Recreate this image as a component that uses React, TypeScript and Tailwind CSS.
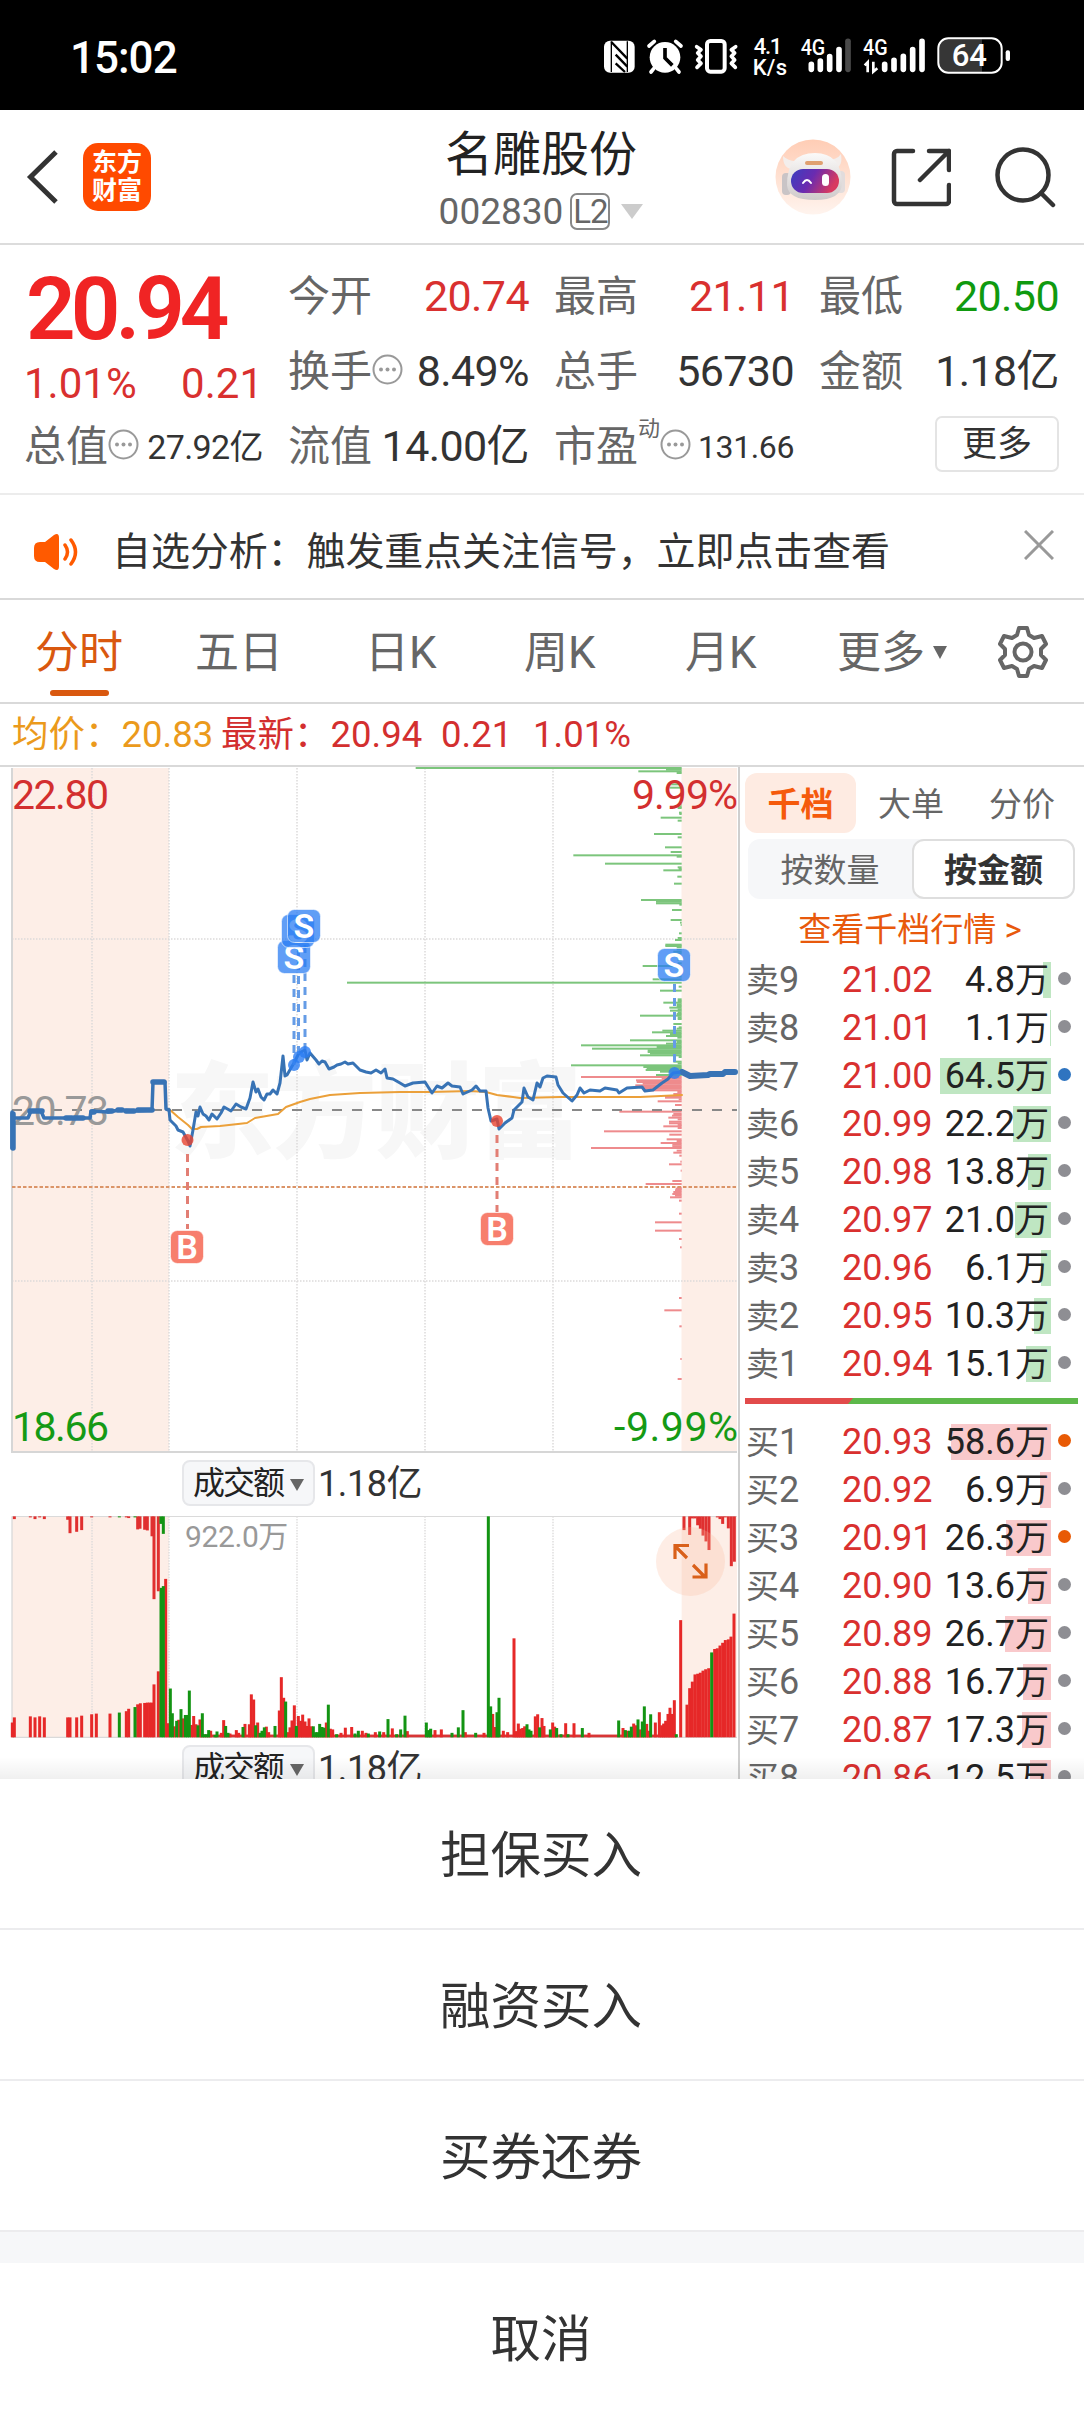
import type { ReactNode } from "react";
import clsx from "clsx";

type Bar = [number, number];

const TABS = [
  { label: "五日", width: "w-[170px]" },
  { label: "日K", width: "w-[159px]" },
  { label: "周K", width: "w-[161px]" },
  { label: "月K", width: "w-[152px]" },
];

const SELL = [
  { name: "卖9", price: "21.02", amount: "4.8万", bar: 8, dot: "gray" },
  { name: "卖8", price: "21.01", amount: "1.1万", bar: 1, dot: "gray" },
  { name: "卖7", price: "21.00", amount: "64.5万", bar: 111, dot: "blue" },
  { name: "卖6", price: "20.99", amount: "22.2万", bar: 38, dot: "gray" },
  { name: "卖5", price: "20.98", amount: "13.8万", bar: 23, dot: "gray" },
  { name: "卖4", price: "20.97", amount: "21.0万", bar: 36, dot: "gray" },
  { name: "卖3", price: "20.96", amount: "6.1万", bar: 10, dot: "gray" },
  { name: "卖2", price: "20.95", amount: "10.3万", bar: 17, dot: "gray" },
  { name: "卖1", price: "20.94", amount: "15.1万", bar: 25, dot: "gray" },
];

const BUY = [
  { name: "买1", price: "20.93", amount: "58.6万", bar: 100, dot: "orange" },
  { name: "买2", price: "20.92", amount: "6.9万", bar: 11, dot: "gray" },
  { name: "买3", price: "20.91", amount: "26.3万", bar: 45, dot: "orange" },
  { name: "买4", price: "20.90", amount: "13.6万", bar: 23, dot: "gray" },
  { name: "买5", price: "20.89", amount: "26.7万", bar: 46, dot: "gray" },
  { name: "买6", price: "20.88", amount: "16.7万", bar: 28, dot: "gray" },
  { name: "买7", price: "20.87", amount: "17.3万", bar: 29, dot: "gray" },
  { name: "买8", price: "20.86", amount: "12.5万", bar: 21, dot: "gray" },
];

// price line before the open, during the session, and after the close
const PRE_LINE =
  "12,1148 12,1112 14,1118 28,1118 31,1111 41,1111 44,1118 90,1118 91,1111 108,1112 120,1110 134,1111 152,1110 153,1082 165,1082 166,1109 169,1110";
const DAY_LINE =
  "169,1110 170,1120 176,1126 178,1130 183,1132 188,1141 190,1146 193,1130 196,1112 198,1116 200,1107 203,1114 206,1116 209,1120 212,1114 217,1119 221,1113 224,1107 231,1111 236,1104 241,1107 246,1109 250,1098 253,1082 256,1092 258,1089 261,1097 264,1100 267,1094 270,1094 273,1090 277,1094 280,1083 283,1056 285,1076 287,1075 291,1068 294,1063 299,1053 305,1050 307,1060 310,1053 316,1060 319,1064 322,1061 325,1062 329,1069 334,1067 337,1065 341,1064 345,1062 348,1064 353,1063 360,1070 366,1072 371,1073 376,1070 381,1073 385,1069 387,1078 393,1079 400,1083 405,1086 413,1083 425,1082 432,1093 437,1086 442,1088 448,1083 452,1086 460,1087 463,1094 472,1090 476,1086 480,1091 486,1091 488,1108 491,1121 497,1119 499,1129 505,1123 512,1118 514,1110 522,1102 524,1088 528,1097 533,1100 537,1083 540,1087 543,1078 547,1076 556,1077 558,1085 563,1093 572,1101 577,1095 580,1088 584,1093 590,1090 600,1091 605,1088 617,1090 619,1093 627,1088 642,1087 645,1091 653,1090 662,1083 668,1079 673,1073 682,1072";
const POST_LINE = "682,1072 690,1076 708,1075 710,1074 723,1074 725,1072 735,1072";
const AVG_LINE =
  "169,1109 178,1117 188,1125 192,1129 197,1129 201,1127 220,1126 247,1123 255,1118 278,1114 286,1107 300,1102 310,1099 330,1095 360,1093 400,1092 430,1092 470,1091 486,1092 497,1095 513,1097 520,1098 560,1097 600,1097 640,1097 682,1095";

// order depth, [y, left edge] in thirds of a pixel, all end at x = 905
const ASK_DEPTH: Bar[] = [
  [24, 107], [29, 858], [34, 775], [39, 890], [73, 868], [83, 868], [134, 897], [140, 893], [144, 893], [158, 897], [162, 898],
  [173, 842], [182, 893], [222, 822], [232, 893], [262, 855], [276, 872], [286, 580], [290, 890], [311, 675],
  [322, 893], [327, 896], [331, 850], [350, 892], [371, 882], [420, 783], [425, 828], [430, 828], [434, 898], [450, 876],
  [480, 872], [488, 900], [495, 902], [520, 897], [534, 893], [540, 885], [554, 856], [558, 856], [563, 890], [568, 890], [575, 880],
  [580, 890], [590, 893], [600, 893], [610, 893], [618, 788], [628, 893], [640, 893], [650, 890], [658, 818], [668, -99],
  [680, 896], [692, 840], [718, 893], [723, 893], [728, 850], [733, 890], [738, 890], [743, 868], [748, 893], [752, 870],
  [757, 893], [762, 890], [767, 780], [772, 893], [777, 893], [792, 880], [802, 896], [806, 890], [812, 847], [817, 816],
  [822, 870], [828, 858], [833, 892], [841, 750], [846, 890], [851, 858], [856, 603], [861, 830], [866, 636], [871, 803],
  [876, 803], [881, 810], [886, 780], [891, 896], [905, 880], [910, 893], [916, 573], [921, 790], [926, 800], [930, 797],
  [935, 840], [940, 870], [945, 828],
];
const BID_DEPTH: Bar[] = [
  [951, 603], [956, 845], [961, 768], [966, 770], [971, 788], [976, 766], [981, 780], [986, 790], [991, 790], [996, 892],
  [1002, 880], [1008, 855], [1013, 855], [1018, 896], [1024, 833], [1035, 885], [1055, 718], [1062, 880], [1067, 876],
  [1073, 865], [1078, 893], [1085, 867], [1090, 867], [1095, 893], [1099, 850], [1104, 893], [1114, 672], [1124, 868],
  [1138, 860], [1143, 890], [1149, 842], [1154, 877], [1159, 877], [1164, 633], [1172, 890], [1178, 880], [1187, 898],
  [1205, 901], [1213, 867], [1232, 902], [1263, 877], [1272, 797], [1283, 890], [1287, 887], [1291, 885], [1296, 880], [1302, 877],
  [1307, 885], [1312, 870], [1322, 897], [1361, 897], [1387, 825], [1412, 825], [1437, 897], [1462, 900], [1614, 897],
  [1651, 853], [1699, 898], [1797, 901], [1857, 893],
];

// turnover bars, [x centre, top]; the base line is at 1443
const UP_VOLUME: Bar[] = [
  [37, 1400], [43, 1385], [91, 1382], [105, 1385], [119, 1382], [133, 1385], [203, 1385], [210, 1385], [230, 1385],
  [245, 1380], [275, 1376], [289, 1374], [330, 1374], [379, 1367], [386, 1360], [413, 1347], [421, 1344], [434, 1343],
  [442, 1342], [449, 1342], [456, 1342], [462, 1289], [475, 1251], [497, 982], [504, 1402], [523, 1411], [536, 1392],
  [549, 1388], [575, 1407], [581, 1381], [588, 1405], [600, 1391], [632, 1424], [664, 1430], [671, 1393], [690, 1432],
  [709, 1422], [716, 1430], [735, 1404], [748, 1405], [754, 1318], [761, 1333], [773, 1400], [799, 1412], [806, 1428],
  [838, 1365], [844, 1268], [851, 1328], [863, 1428], [870, 1414], [876, 1394], [883, 1350], [895, 1381], [902, 1395],
  [908, 1377], [915, 1397], [921, 1410], [927, 1388], [934, 1411], [979, 1400], [991, 1418], [998, 1420], [1023, 1430],
  [1036, 1415], [1055, 1413], [1087, 1424], [1098, 1430], [1126, 1428], [1151, 1428], [1177, 1417], [1222, 1425],
  [1305, 1422], [1324, 1420], [1396, 1428], [1452, 1430], [1478, 1375], [1485, 1413], [1510, 1424], [1523, 1428],
  [1542, 1155], [1549, 1425], [1555, 1403], [1561, 1418], [1568, 1416], [1574, 1411], [1606, 1382], [1613, 1376],
  [1626, 1387], [1632, 1410], [1658, 1400], [1664, 1412], [1697, 1402], [1722, 1402], [1767, 1430], [1869, 1416],
  [1882, 1424], [1901, 1403], [1908, 1408], [1920, 1420], [1940, 1404], [1946, 1424], [1966, 1400], [1978, 1370],
  [1985, 1408], [1991, 1403], [1997, 1395], [2004, 1375], [2010, 1357], [2017, 1375], [2023, 1335], [2042, 1102],
  [2061, 1348], [2069, 1300], [2077, 1281], [2085, 1260], [2093, 1258], [2101, 1255], [2109, 1249], [2117, 1245],
  [2126, 1242], [2144, 1186], [2152, 1184], [2160, 1176], [2168, 1168], [2176, 1160], [2185, 1158], [2193, 1150],
  [2202, 1083],
];
const DOWN_VOLUME: Bar[] = [
  [358, 1371], [405, 1355], [483, 1008], [490, 1003], [511, 1301], [517, 1373], [530, 1395], [543, 1361], [556, 1378],
  [562, 1378], [568, 1307], [594, 1408], [607, 1373], [613, 1434], [620, 1434], [626, 1422], [645, 1436], [651, 1426],
  [677, 1410], [684, 1430], [729, 1413], [767, 1408], [780, 1430], [786, 1424], [793, 1414], [825, 1410], [857, 1339],
  [889, 1410], [940, 1411], [947, 1428], [953, 1428], [959, 1404], [966, 1413], [972, 1415], [985, 1348], [1010, 1434],
  [1065, 1432], [1075, 1424], [1105, 1432], [1139, 1426], [1164, 1390], [1190, 1434], [1202, 1420], [1215, 1380],
  [1279, 1400], [1286, 1422], [1292, 1418], [1356, 1430], [1375, 1414], [1389, 1364], [1427, 1430], [1465, 800],
  [1472, 1353], [1491, 1370], [1497, 1328], [1581, 1405], [1587, 1420], [1593, 1424], [1619, 1414], [1651, 1420],
  [1670, 1416], [1683, 1434], [1704, 1434], [1747, 1416], [1856, 1394], [1876, 1422], [1888, 1424], [1894, 1412],
  [1914, 1391], [1927, 1397], [1933, 1353], [1952, 1376], [2029, 1434], [2135, 1196],
];

// unmatched auction volume hangs down from the top edge at 800
const HANG_UP: Bar[] = [
  [43, 808], [91, 803], [105, 808], [119, 803], [133, 808], [203, 810], [210, 849], [230, 845], [245, 840], [275, 803],
  [330, 803], [379, 803], [386, 805], [413, 838], [420, 836], [434, 839], [442, 841], [456, 858], [462, 1041], [475, 1018],
  [2052, 840], [2069, 854], [2077, 806], [2085, 806], [2093, 826], [2101, 836], [2109, 856], [2118, 873], [2127, 898],
  [2152, 803], [2160, 808], [2168, 822], [2176, 803], [2185, 835], [2194, 945], [2203, 932],
];
const HANG_DOWN: Bar[] = [[358, 803], [405, 803], [483, 822], [490, 851]];

const SHEET = ["担保买入", "融资买入", "买券还券"];

function StatusBar() {
  return (
    <div className="flex h-[110px] shrink-0 items-center justify-between bg-black pl-[70px] pr-[59px] text-white">
      <span className="mt-1.5 text-[44px] font-medium leading-none tracking-[-1px]">15:02</span>
      <svg className="h-[70px] w-[430px]" viewBox="0 0 1290 210" fill="none">
        {/* NFC */}
        <rect x="27" y="62" width="92" height="96" rx="18" fill="#fff" />
        <path d="M49 64v92M97 64v92" stroke="#000" strokeWidth="4" />
        <path d="M49 66 97 116M62 104 97 140M62 130l28 26" stroke="#000" strokeWidth="7" />
        {/* alarm */}
        <circle cx="210" cy="112" r="46" fill="#fff" />
        <path d="m162 78 16-14M258 78l-16-14M176 146l-8 10M244 146l8 10" stroke="#fff" strokeWidth="11" strokeLinecap="round" />
        <path d="M210 84v30l22 22" stroke="#000" strokeWidth="11" />
        {/* vibrate */}
        <rect x="336" y="63" width="53" height="92" rx="10" stroke="#fff" strokeWidth="12" />
        <path d="m305 80 13 9-10 10 10 10-10 11 10 10-12 12M422 80l-13 9 10 10-10 10 10 11-10 10 12 12" stroke="#fff" strokeWidth="11" strokeLinejoin="round" strokeLinecap="round" />
        <g fill="#fff" fontFamily="Roboto, sans-serif" fontWeight="500">
          <text x="476" y="101" fontSize="66" textLength="86">4.1</text>
          <text x="473" y="164" fontSize="66" textLength="103">K/s</text>
          <text x="617" y="106" fontSize="66" textLength="74" lengthAdjust="spacingAndGlyphs">4G</text>
          <text x="804" y="106" fontSize="66" textLength="74" lengthAdjust="spacingAndGlyphs">4G</text>
        </g>
        <g stroke="#fff" strokeWidth="17" strokeLinecap="round">
          <path d="M649 133v15M676 123v25M704 110v38M732 89v59" />
          <path d="M759 64v84" stroke="#4a4a4a" />
          <path d="M869 133v15M897 121v27M925 109v39M953 89v59M981 64v84" />
        </g>
        <path d="M809 136l9-9v30M835 125v30l12-10" stroke="#fff" strokeWidth="8" />
        {/* battery */}
        <rect x="1030" y="55" width="190" height="103" rx="30" fill="#000" />
        <path d="M1060 58h101v98h-101a27 27 0 0 1-27-27V85a27 27 0 0 1 27-27Z" fill="#363636" />
        <rect x="1030" y="55" width="190" height="103" rx="30" stroke="#fff" strokeWidth="6" />
        <rect x="1232" y="91" width="13" height="32" rx="6" fill="#fff" />
        <text x="1070" y="139" fill="#fff" fontSize="92" fontFamily="Roboto, sans-serif" fontWeight="500" textLength="106" lengthAdjust="spacingAndGlyphs">64</text>
      </svg>
    </div>
  );
}

function Header() {
  return (
    <header className="grid h-[135px] shrink-0 grid-cols-[1fr_auto_1fr] items-center border-b-2 border-[#dcdcdc] pl-[26px] pr-[28px]">
      <div className="flex items-center gap-[23px]">
        <svg className="h-[56px] w-[34px]" viewBox="0 0 34 56" fill="none">
          <path d="M30 3 4.500 28 30 53" stroke="#333" strokeWidth="5" />
        </svg>
        <div className="flex size-[68px] flex-col items-center justify-center rounded-[15px] bg-[#ff4a00] text-[25px] font-bold leading-[28px] text-white">
          <span>东方</span>
          <span>财富</span>
        </div>
      </div>
      <div className="flex flex-col items-center pt-[4px]">
        <h1 className="text-[48px] leading-[62px] text-[#222]">名雕股份</h1>
        <div className="flex h-[48px] items-center pt-[3px] text-[#666]">
          <span className="text-[37px] leading-none">002830</span>
          <span className="ml-[7px] flex h-[37px] w-[40px] items-center justify-center rounded-[7px] border-2 border-[#888] text-[33px] leading-none tracking-[-1px]">L2</span>
          <svg className="ml-[11px] h-[15px] w-[22px]" viewBox="0 0 22 15">
            <path d="M0 0h22L11 15Z" fill="#ccc" />
          </svg>
        </div>
      </div>
      <div className="flex items-center justify-end">
        <svg className="size-[76px]" viewBox="0 0 76 76">
          <defs>
            <linearGradient id="halo" x1="0" y1="0" x2="0" y2="1">
              <stop offset="0" stopColor="#ffcdb5" />
              <stop offset="1" stopColor="#fff4ee" />
            </linearGradient>
            <linearGradient id="visor" x1="0" y1="0" x2="1" y2="0.3">
              <stop offset="0" stopColor="#3a3fc0" />
              <stop offset="0.5" stopColor="#6a2bb0" />
              <stop offset="1" stopColor="#d83a60" />
            </linearGradient>
            <linearGradient id="shell" x1="0" y1="0" x2="0" y2="1">
              <stop offset="0" stopColor="#fbfaf9" />
              <stop offset="1" stopColor="#cfcaca" />
            </linearGradient>
          </defs>
          <circle cx="38" cy="38" r="37.500" fill="url(#halo)" />
          <path d="M8 17q0 13 10 13l5-8q-9 1-15-5ZM66 15q2 13-6 14l-8-8q10 0 14-6Z" fill="#f3eeec" />
          <rect x="7" y="34" width="9" height="22" rx="4" fill="#c9c4c6" />
          <rect x="61" y="32" width="9" height="22" rx="4" fill="#e2dcdc" />
          <path d="M12 46q0-32 28-32 26 0 27 30 0 17-27 17T12 46Z" fill="url(#shell)" />
          <rect x="30" y="22" width="18" height="4" rx="2" fill="#e0a070" />
          <rect x="16" y="30" width="48" height="24" rx="12" fill="url(#visor)" />
          <path d="M28 44q4-6 8 0" stroke="#fff" strokeWidth="2" fill="none" strokeLinecap="round" />
          <rect x="47" y="35" width="7" height="12" rx="3.500" fill="#fff" />
        </svg>
        <svg className="ml-[40px] size-[60px]" viewBox="0 0 60 60" fill="none" stroke="#333" strokeWidth="4.500" strokeLinecap="round" strokeLinejoin="round">
          <path d="M22 4H6a3 3 0 0 0-3 3v47a3 3 0 0 0 3 3h49a3 3 0 0 0 3-3V38M38 4h20v19M58 4 29 33" />
        </svg>
        <svg className="ml-[43px] size-[62px]" viewBox="0 0 62 62" fill="none" stroke="#333" strokeWidth="4.500" strokeLinecap="round">
          <circle cx="29" cy="29" r="25.500" />
          <path d="m47 47 12 12" />
        </svg>
      </div>
    </header>
  );
}

function InfoDot() {
  return (
    <svg className="mb-[4px] size-[31px] shrink-0" viewBox="0 0 31 31">
      <circle cx="15.500" cy="15.500" r="14" fill="none" stroke="#999" strokeWidth="2" />
      <circle cx="9" cy="15.500" r="2" fill="#999" />
      <circle cx="15.500" cy="15.500" r="2" fill="#999" />
      <circle cx="22" cy="15.500" r="2" fill="#999" />
    </svg>
  );
}

function Stat({ label, value, info, tone = "text-[#333]", size = "text-[43px]" }: {
  label: string;
  value: string;
  info?: boolean;
  tone?: string;
  size?: string;
}) {
  return (
    <div className="flex h-[75px] items-center justify-between whitespace-nowrap leading-none">
      <span className="flex items-center text-[42px] text-[#666]">
        {label}
        {info && <InfoDot />}
      </span>
      <span className={clsx("tracking-[-0.6px]", size, tone)}>{value}</span>
    </div>
  );
}

function Stats() {
  return (
    <section className="grid h-[250px] shrink-0 grid-cols-[239px_241px_240px_240px] gap-x-[25px] border-b-2 border-[#ececec] pl-[24px] pt-[14px]">
      <div className="flex flex-col leading-none">
        <div className="flex h-[97px] items-center pl-[2px] pt-[3px] text-[87px] font-semibold tracking-[-5px] text-[#f02424]">20.94</div>
        <div className="flex h-[53px] items-center justify-between pt-[3px] text-[42px] text-[#d9302f]">
          <span>1.01%</span>
          <span>0.21</span>
        </div>
        <Stat label="总值" value="27.92亿" info size="text-[34px]" />
      </div>
      <div>
        <Stat label="今开" value="20.74" tone="text-[#d9302f]" />
        <Stat label="换手" value="8.49%" info />
        <Stat label="流值" value="14.00亿" />
      </div>
      <div>
        <Stat label="最高" value="21.11" tone="text-[#d9302f]" />
        <Stat label="总手" value="56730" />
        <div className="flex h-[75px] items-center justify-between whitespace-nowrap leading-none">
          <span className="flex items-center text-[42px] text-[#666]">
            市盈
            <span className="mb-[36px] text-[22px]">动</span>
            <InfoDot />
          </span>
          <span className="text-[32px] tracking-[-0.4px] text-[#333]">131.66</span>
        </div>
      </div>
      <div>
        <Stat label="最低" value="20.50" tone="text-[#0f9a0f]" />
        <Stat label="金额" value="1.18亿" />
        <div className="flex justify-end pt-[7px]">
          <button className="h-[56px] w-[124px] rounded-[7px] border-2 border-[#e4e4e4] text-[35px] leading-none text-[#333]">更多</button>
        </div>
      </div>
    </section>
  );
}

function Notice() {
  return (
    <section className="flex h-[105px] shrink-0 items-center border-b-2 border-[#d9d9d9] pl-[34px] pr-[30px] pt-[10px]">
      <svg className="h-[36px] w-[46px]" viewBox="0 0 46 36" fill="none">
        <path d="M0 14q0-6 6-6h5l9-7q5-3 5 3v28q0 6-5 3l-9-7H6q-6 0-6-6Z" fill="#ff5a00" />
        <path d="M31 11q5 7 0 14M37 6q9 12 0 24" stroke="#ff5a00" strokeWidth="3.500" strokeLinecap="round" />
      </svg>
      <p className="ml-[32px] flex-1 pt-[2px] text-[39px] leading-none tracking-[-0.1px] text-[#333]">自选分析：触发重点关注信号，立即点击查看</p>
      <svg className="mb-[14px] size-[30px]" viewBox="0 0 30 30" fill="none">
        <path d="m1 1 28 28M29 1 1 29" stroke="#999" strokeWidth="3" />
      </svg>
    </section>
  );
}

function Tabs() {
  return (
    <nav className="flex h-[104px] shrink-0 items-center whitespace-nowrap border-b-2 border-[#d9d9d9] pl-[35px] pt-[3px] text-[44px] leading-none text-[#666]">
      <div className="flex w-[160px] flex-col pt-[22px]">
        <span className="text-[#d9580f]">分时</span>
        <span className="ml-[15px] mt-[15px] h-[6px] w-[59px] rounded-full bg-[#d9580f]" />
      </div>
      {TABS.map((t) => (
        <span key={t.label} className={t.width}>{t.label}</span>
      ))}
      <span>更多</span>
      <svg className="ml-[8px] h-[13px] w-[14px]" viewBox="0 0 14 13">
        <path d="M0 0h14L7 13Z" fill="#666" />
      </svg>
      <svg className="mb-[2px] ml-[49px] size-[54px]" viewBox="0 0 54 54" fill="none" stroke="#666" strokeWidth="4" strokeLinejoin="round">
        <path d="M23 3h8l2 7 5 3 8-2 4 8-5 5v6l5 5-4 8-8-2-5 3-2 7h-8l-2-7-5-3-8 2-4-8 5-5v-6l-5-5 4-8 8 2 5-3Z" />
        <circle cx="27" cy="27" r="8.500" />
      </svg>
    </nav>
  );
}

function Averages() {
  return (
    <div className="flex h-[63px] shrink-0 items-center whitespace-nowrap border-b-2 border-[#d9d9d9] pl-[12px] pt-[2px] text-[36.500px] leading-none text-[#d32f2f]">
      <span className="w-[209px] text-[#eb9a1c]">均价：20.83</span>
      <span className="w-[220px]">最新：20.94</span>
      <span className="w-[92px]">0.21</span>
      <span>1.01%</span>
    </div>
  );
}

function Marker({ x, y, side }: { x: number; y: number; side: "S" | "B" }) {
  return (
    <g>
      <rect x={x} y={y} width="33" height="33" rx="7" fill={side === "S" ? "#2b7df3" : "#f5624d"} fillOpacity={side === "S" ? 0.75 : 0.82} stroke="#fff" strokeOpacity="0.6" />
      <text x={x + 16.5} y={y + 28.5} textAnchor="middle" fontSize="34" fontWeight="600" fill="#fff" fontFamily="Roboto, sans-serif">{side}</text>
    </g>
  );
}

function Depth({ bars, color }: { bars: Bar[]; color: string }) {
  return (
    <g transform="translate(380 760) scale(.33333)" fill={color}>
      {bars.map(([y, x]) => (
        <rect key={y} x={x} y={y - 3} width={905 - x} height="6" />
      ))}
    </g>
  );
}

function PriceChart() {
  return (
    <svg className="block h-[686px] w-[738px] shrink-0" viewBox="0 767 738 686" fontFamily="Roboto, 'Noto Sans CJK SC', sans-serif">
      <rect x="12" y="768" width="157" height="684" fill="#fdeee7" />
      <rect x="681.500" y="768" width="55.500" height="684" fill="#fdeee7" />
      <text x="170" y="1150" fontSize="104" fontWeight="900" fill="#f7f7f7" textLength="412">东方财富</text>
      <path d="M92 768v684M169 768v684M297 768v684M425 768v684M553 768v684M12 939h725M12 1281h725" stroke="#dcdada" strokeWidth="1.500" strokeDasharray="1.500 1.500" />
      <path d="M12 768v684h725" stroke="#d6d6d6" strokeWidth="2" fill="none" />
      <Depth bars={ASK_DEPTH} color="#7cc57c" />
      <Depth bars={BID_DEPTH} color="#ee8b8d" />
      <path d="M12 1110h725" stroke="#888" strokeWidth="2" strokeDasharray="10 10" />
      <path d="M12 1187h725" stroke="#db9468" strokeWidth="2" strokeDasharray="3.500 2" />
      <text x="12" y="1125" fontSize="41" fill="#999" textLength="97">20.73</text>
      <g fill="none" strokeLinejoin="round" strokeLinecap="round">
        <polyline points={AVG_LINE} stroke="#eba03a" strokeWidth="2" />
        <polyline points={DAY_LINE} stroke="#3873b5" strokeWidth="3" />
        <polyline points={PRE_LINE} stroke="#3873b5" strokeWidth="3.500" />
        <path d="M13 1114v34M30 1111h12M66 1118h6M74 1118h9M92 1112h2M108 1111h4M118 1110h4M126 1111h8M138 1110h14M153 1082h11" stroke="#3873b5" strokeWidth="5.500" />
        <polyline points={POST_LINE} stroke="#3873b5" strokeWidth="6" />
      </g>
      <g strokeWidth="3" strokeDasharray="8 6" fill="none">
        <path d="M294 975v90M298.500 948v110M305 945v104M674.500 984v84" stroke="#659ce6" />
        <path d="M187.500 1154v75M497 1135v77" stroke="#e27e74" />
      </g>
      <g fill="#2b7df3" fillOpacity="0.8">
        <circle cx="294" cy="1065" r="6" />
        <circle cx="299" cy="1057" r="6" />
        <circle cx="305" cy="1052" r="6" />
        <circle cx="674.500" cy="1073" r="6" />
      </g>
      <g fill="#e8432f" fillOpacity="0.8">
        <circle cx="187.500" cy="1140" r="6" />
        <circle cx="497" cy="1121" r="6" />
      </g>
      <Marker x={277.5} y={940.5} side="S" />
      <Marker x={281.5} y={914.5} side="S" />
      <Marker x={287.5} y={909.5} side="S" />
      <Marker x={657.5} y={948.5} side="S" />
      <Marker x={170.5} y={1230.5} side="B" />
      <Marker x={480.5} y={1212.5} side="B" />
      <g fontSize="41">
        <text x="12" y="809" fill="#d32f2f" textLength="97">22.80</text>
        <text x="632" y="809" fill="#d32f2f" textLength="106">9.99%</text>
        <text x="12" y="1441" fill="#159a15" textLength="97">18.66</text>
        <text x="614" y="1441" fill="#159a15" textLength="124">-9.99%</text>
      </g>
    </svg>
  );
}

function Rising({ bars, color }: { bars: Bar[]; color: string }) {
  return (
    <g fill={color}>
      {bars.map(([x, top]) => (
        <rect key={x} x={x - 4.5} y={top} width="9" height={1443 - top} />
      ))}
    </g>
  );
}

function Hanging({ bars, color }: { bars: Bar[]; color: string }) {
  return (
    <g fill={color}>
      {bars.map(([x, end]) => (
        <rect key={x} x={x - 4.5} y="800" width="9" height={end - 800} />
      ))}
    </g>
  );
}

function VolumeChart() {
  return (
    <div className="relative h-[222px] shrink-0">
      <svg className="block h-[222px] w-[738px]" viewBox="0 799 2214 646" preserveAspectRatio="none">
        <rect x="36" y="800" width="471" height="643" fill="#fdeee7" />
        <rect x="2045" y="800" width="166" height="643" fill="#fdeee7" />
        <path d="M276 800v643M507 800v643M891 800v643M1275 800v643M1659 800v643" stroke="#dcdada" strokeWidth="4" strokeDasharray="4 4" />
        <path d="M36 800H2211M36 800v643H2211" stroke="#dadada" strokeWidth="4" fill="none" />
        <rect x="600" y="1435" width="1430" height="8" fill="#d83535" />
        <Rising bars={UP_VOLUME} color="#e62828" />
        <Rising bars={DOWN_VOLUME} color="#139413" />
        <Hanging bars={HANG_UP} color="#e03030" />
        <Hanging bars={HANG_DOWN} color="#139413" />
      </svg>
      <span className="absolute left-[185px] top-[6px] text-[30px] leading-none tracking-[-0.4px] text-[#999]">922.0万</span>
      <svg className="absolute left-[656px] top-[11px] size-[69px]" viewBox="0 0 69 69" fill="none">
        <circle cx="34.500" cy="34.500" r="34.500" fill="#fbb999" fillOpacity="0.25" />
        <path d="M31 31 19 19M19 32V18.500h14M37 38l12 12M50 36.500V50H36.500" stroke="#d9601a" strokeWidth="3.200" />
      </svg>
    </div>
  );
}

function IndicatorRow({ className }: { className: string }) {
  return (
    <div className={clsx("flex shrink-0 items-start pl-[182px]", className)}>
      <div className="flex h-[46px] w-[133px] items-center rounded-[8px] border-2 border-[#e6e7ea] bg-[#f6f7f9] pl-[9px]">
        <span className="text-[32px] leading-none tracking-[-2px] text-[#222]">成交额</span>
        <svg className="ml-[7px] mt-[3px] h-[12px] w-[14px]" viewBox="0 0 14 12">
          <path d="M0 0h14L7 12Z" fill="#666" />
        </svg>
      </div>
      <span className="ml-[3px] text-[36px] leading-[48px] tracking-[-0.4px] text-[#333]">1.18亿</span>
    </div>
  );
}

function BookRow({ name, price, amount, bar, dot, tint }: (typeof SELL)[number] & { tint: string }) {
  return (
    <div className="flex h-[48px] shrink-0 items-center whitespace-nowrap pl-[6px] text-[36px] leading-none">
      <span className="w-[96px] text-[#666]">
        <span className="text-[33px]">{name[0]}</span>
        {name[1]}
      </span>
      <span className="w-[93px] text-[#d9302f]">{price}</span>
      <span className="relative flex h-[36px] flex-1 items-center justify-end pr-[2px] text-[#222]">
        <span className={clsx("absolute inset-y-0 right-0", tint)} style={{ width: bar }} />
        <span className="relative">
          {amount.slice(0, -1)}
          <span className="text-[34px]">万</span>
        </span>
      </span>
      <span
        className={clsx(
          "mb-1 ml-[7px] mr-[13px] size-[13px] rounded-full",
          dot === "gray" && "bg-[#8e8e93]",
          dot === "blue" && "bg-[#2f74c0]",
          dot === "orange" && "bg-[#e85a05]",
        )}
      />
    </div>
  );
}

function OrderBook() {
  return (
    <aside className="flex w-[346px] shrink-0 flex-col border-l-2 border-[#cfcfcf]">
      <div className="ml-[5px] mt-[6px] flex h-[60px] shrink-0 items-center text-[33px] leading-none text-[#666]">
        <span className="flex h-full w-[111px] items-center justify-center rounded-[12px] bg-[#feebe2] pt-[2px] font-bold text-[#f55a0c]">千档</span>
        <span className="w-[111px] pl-[22px] pt-[2px]">大单</span>
        <span className="pl-[22px] pt-[2px]">分价</span>
      </div>
      <div className="ml-[8px] mt-[6px] flex h-[60px] w-[327px] shrink-0 rounded-[12px] bg-[#f6f7f9] text-[33px] leading-none text-[#666]">
        <span className="flex flex-1 items-center justify-center pt-[2px]">按数量</span>
        <span className="flex w-[163px] items-center justify-center rounded-[12px] border-2 border-[#dedede] bg-white pt-[2px] font-bold text-[#333]">按金额</span>
      </div>
      <a className="flex h-[57px] shrink-0 items-center justify-center pr-[4px] pt-[4px] text-[33px] leading-none text-[#e8590c]">查看千档行情 &gt;</a>
      {SELL.map((r) => (
        <BookRow key={r.name} {...r} tint="bg-[#bfe6c2]" />
      ))}
      <div className="ml-[5px] mt-[10px] mb-[14px] flex h-[6px] w-[333px] shrink-0 bg-[#5db84a]">
        <svg className="h-[6px] w-[108px]" viewBox="0 0 108 6">
          <path d="M0 0h108l-5 6H0Z" fill="#e24b4b" />
        </svg>
      </div>
      {BUY.map((r) => (
        <BookRow key={r.name} {...r} tint="bg-[#f9c9cb]" />
      ))}
    </aside>
  );
}

function SheetItem({ children, className }: { children: ReactNode; className: string }) {
  return (
    <button className={clsx("flex w-full items-center justify-center pr-[2px] pt-[5px] text-[50.500px] leading-none text-[#333]", className)}>
      {children}
    </button>
  );
}

export default function App() {
  return (
    <div className="flex h-[2412px] w-[1084px] flex-col overflow-hidden bg-white font-[Roboto,'Noto_Sans_CJK_SC',sans-serif]">
      <StatusBar />
      <Header />
      <Stats />
      <Notice />
      <Tabs />
      <Averages />
      <main className="relative flex h-[1012px] shrink-0 overflow-hidden">
        <div className="flex w-[738px] shrink-0 flex-col">
          <PriceChart />
          <IndicatorRow className="h-[63px] pt-[7px]" />
          <VolumeChart />
          <IndicatorRow className="pt-[7px]" />
        </div>
        <OrderBook />
        <div className="absolute inset-x-0 bottom-0 h-[22px] bg-linear-to-b from-transparent to-black/6" />
      </main>
      <div className="flex flex-1 flex-col bg-white">
        {SHEET.map((s) => (
          <SheetItem key={s} className="h-[151px] border-b-2 border-[#ececee]">{s}</SheetItem>
        ))}
        <div className="h-[31px] bg-[#f6f7f9]" />
        <SheetItem className="h-[149px]">取消</SheetItem>
      </div>
    </div>
  );
}
